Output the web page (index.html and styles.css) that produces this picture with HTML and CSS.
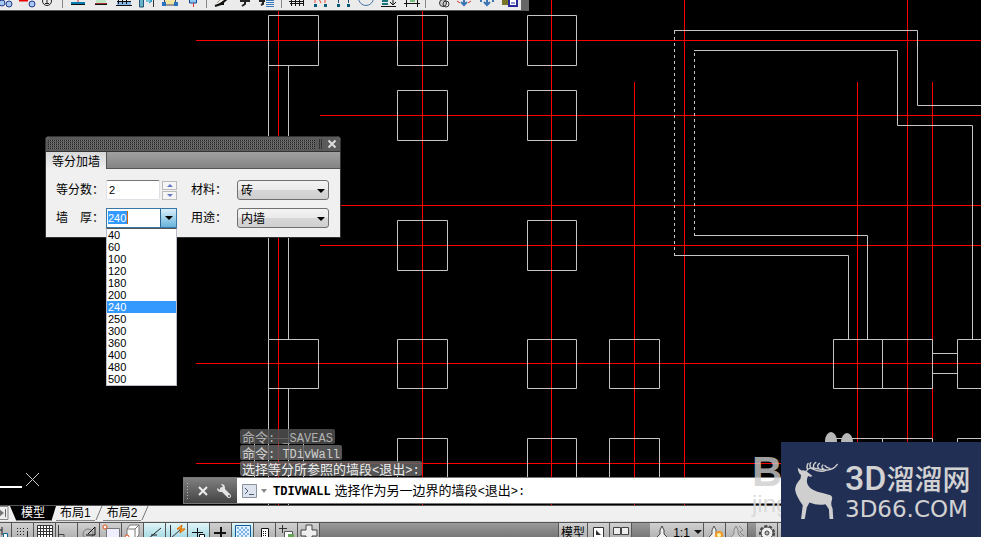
FILE: index.html
```html
<!DOCTYPE html>
<html lang="zh-CN">
<head>
<meta charset="utf-8">
<title>等分加墙</title>
<link rel="stylesheet" href="styles.css">
</head>
<body>
<main class="canvas">
  <svg class="drawing" width="100%" height="100%" aria-hidden="true">
    <g class="axis">
      <path d="M196 40.5H3000M320 115.5H3000M320 205.5H3000M320 245.5H3000M196 363.5H3000M196 463.5H3000"/>
      <path d="M278.500 0V505M422.500 0V505M551.500 0V505M634.500 82V505M684.500 0V505M857.500 82V505M907.500 0V505M932.500 82V505"/>
    </g>
    <g class="wall">
      <path d="M268.500 15.500h50v50h-50zM397.500 15.500h50v50h-50zM527.500 15.500h49v50h-49zM397.500 90.500h50v50h-50zM527.500 90.500h49v50h-49zM397.500 220.500h50v50h-50zM527.500 220.500h49v50h-49z"/>
      <path d="M268.500 339.500h50v49h-50zM397.500 339.500h50v49h-50zM527.500 339.500h49v49h-49zM609.500 339.500h50v49h-50zM833.500 339.500h49v49h-49zM882.500 339.500h50v49h-50zM957.500 339.500h50v49h-50zM932.500 353.500h25M932.500 373.500h25"/>
      <path d="M254.500 438.500h49v50h-49zM397.500 438.500h50v50h-50zM527.500 438.500h49v50h-49zM609.500 438.500h50v50h-50zM833.500 438.500h49v50h-49zM882.500 438.500h50v50h-50zM957.500 438.500h50v50h-50z"/>
      <path d="M268.500 65V339M288.500 65V339M268.500 388V505M288.500 388V505"/>
      <path d="M674 30.500H917.500V105.500H1000M694 50.500H897.500V125.500H972.500V339M694 235.500H867.500V339M674 255.500H848.500V339"/>
      <path stroke-dasharray="3 3" d="M674.500 31V255M694.500 53V235"/>
    </g>
    <path stroke="#fff" stroke-width="2" d="M0 487H22"/>
    <path stroke="#ccc" d="M26 473L39 486M39 473L26 486"/>
  </svg>

  <div class="toolbar" role="toolbar" aria-label="工具">
    <button aria-label="轴号"><svg viewBox="0 0 20 10"><g fill="#a9c8f0" stroke="#223a8c"><circle cx="9" cy="3" r="3"/><circle cx="16" cy="4" r="3"/></g></svg></button>
    <button aria-label="删除轴号"><svg viewBox="0 0 20 10"><path stroke="#e00" stroke-width="2" d="M3 0.500H12"/><circle cx="16" cy="4" r="3" fill="#a9c8f0" stroke="#223a8c"/></svg></button>
    <button aria-label="编号"><svg viewBox="0 0 20 10"><circle cx="8" cy="1" r="4.500" fill="none" stroke="#222"/><path stroke="#222" d="M8 0V4M6 3.500h4"/></svg></button>
    <i></i>
    <button aria-label="墙体"><svg viewBox="0 0 20 10"><path stroke="#d33" d="M10 0V3"/><path fill="#087eb0" d="M3 2h14v3H3z"/><path fill="#111" d="M3 4h14v1H3z"/></svg></button>
    <button aria-label="墙面"><svg viewBox="0 0 20 10"><path fill="#bfe6c4" d="M5 0h10v4H5z"/><path stroke="#a33" d="M4 3.500h12"/><path stroke="#111" d="M4 4.500h12"/></svg></button>
    <button aria-label="幕墙"><svg viewBox="0 0 20 10"><path fill="#88b8e8" d="M3 1h14v4H3z"/><path stroke="#111" d="M2 5.500h16M4.500 0v4M8.500 0v4M12.500 0v4M3 1.500h14"/></svg></button>
    <button aria-label="偏移"><svg viewBox="0 0 20 10"><path fill="#64b5c9" stroke="#257" d="M2.500-1h4v8h-4z"/><path stroke="#19c" fill="none" d="M9 1h6M12-1l3 2-3 2"/><path stroke="#333" d="M16.500 0v7"/></svg></button>
    <button aria-label="房间"><svg viewBox="0 0 20 10"><path fill="#efe4a0" stroke="#446" d="M4.500-1h11v6h-11z"/><path fill="#2872c0" d="M2 2h4v4H2zM14 2h4v4h-4z"/></svg></button>
    <button aria-label="标柱"><svg viewBox="0 0 20 10"><path fill="#90c8f0" stroke="#149" d="M6.500-1h7v4h-7z"/><path stroke="#d33" d="M10.500 3v4"/></svg></button>
    <i></i>
    <button aria-label="画笔"><svg viewBox="0 0 20 10"><path stroke="#111" stroke-width="2" d="M3 6l6-2 7-6M9 4l3 0"/><path stroke="#a98" d="M8 0l-3 3"/></svg></button>
    <button aria-label="文字"><svg viewBox="0 0 20 10"><path fill="none" stroke="#222" stroke-width="2" d="M5 1h10M10-1v5l-3 2"/></svg></button>
    <button aria-label="多行文字"><svg viewBox="0 0 20 10"><path fill="none" stroke="#222" stroke-width="2" d="M1 1h6M5-1v5l-2 1"/><path stroke="#3779bd" d="M8 .5h8M8 2.500h8M8 4.500h8M8 6.500h8"/></svg></button>
    <i></i>
    <button aria-label="标注"><svg viewBox="0 0 20 10"><path fill="none" stroke="#111" d="M3 3.500h14M4.500-1v7M8.500-1v7M12.500-1v7M16.500-1v7M2 1.500h15"/></svg></button>
    <button aria-label="逐点"><svg viewBox="0 0 20 10"><path fill="#075b7b" d="M4 4h3v3H4zM14 4h3v3h-3z"/><path stroke="#e43" d="M5 0v3M9-1l2 4M15 0v3"/></svg></button>
    <button aria-label="两点"><svg viewBox="0 0 20 10"><path fill="#075b7b" d="M4 4h3v3H4zM14 4h3v3h-3z"/><path stroke="#246" d="M5.500 0v3M15.500 0v3"/></svg></button>
    <button aria-label="半径"><svg viewBox="0 0 20 10"><circle cx="10" cy="-2" r="7.500" fill="none" stroke="#4777aa"/></svg></button>
    <button aria-label="标高"><svg viewBox="0 0 20 10"><path stroke="#18747f" stroke-width="2" d="M3 1h6M3 4h6"/><path stroke="#111" fill="none" d="M2 6.500h15M14-1v5M11 2l3 3 3-3"/></svg></button>
    <button aria-label="修剪"><svg viewBox="0 0 20 10"><path stroke="#111" d="M2 3.500h16M4.500-1v8M15.500-1v8"/><path fill="#75bd80" d="M8 0h5v2H8z"/></svg></button>
    <i></i>
    <button aria-label="视口"><svg viewBox="0 0 20 10"><circle cx="12" cy="3" r="3.500" fill="#ccc" stroke="#333"/><circle cx="15" cy="4" r="3" fill="none" stroke="#333"/></svg></button>
    <button aria-label="移动"><svg viewBox="0 0 20 10"><path fill="none" stroke="#3b75b5" stroke-width="2" d="M10-1v6M7 2l3 3 3-3"/><path stroke="#d33" d="M3 1l3 2M17 1l-3 2"/></svg></button>
    <button aria-label="插入"><svg viewBox="0 0 20 10"><path fill="none" stroke="#3b75b5" stroke-width="2" d="M10-1v6M7 2l3 3 3-3M3 1h2M15 1h2"/></svg></button>
    <button aria-label="保存"><svg viewBox="0 0 20 10"><path fill="#777526" d="M2 0h7v5H2z"/><path fill="#fff" stroke="#2b2a9b" stroke-width="2" d="M9-1h8v7H9z"/><path stroke="#2b2a9b" d="M11 3h4"/></svg></button>
  </div>

  <section class="dialog" aria-label="等分加墙">
    <header class="grip"><span class="dots"></span><span class="bars"></span><button class="close" aria-label="关闭"><svg viewBox="0 0 10 10"><path d="M1.500 1.500l7 7M8.500 1.500l-7 7" stroke="#ddd" stroke-width="2"/></svg></button></header>
    <div class="caption"><h1>等分加墙</h1></div>
    <form class="fields">
      <label for="count">等分数：</label>
      <div class="spin"><input id="count" type="text" value="2"><span><button type="button" aria-label="增加"></button><button type="button" class="down" aria-label="减少"></button></span></div>
      <label for="material">材料：</label>
      <div class="pick"><select id="material"><option>砖</option></select></div>
      <label for="thick" class="spread"><span>墙</span><span>厚：</span></label>
      <div class="combo">
        <div class="value"><input id="thick" type="text" value="240" role="combobox" aria-expanded="true" aria-controls="sizes"></div><button type="button" aria-label="展开"></button>
        <ul id="sizes" role="listbox">
          <li role="option">40</li><li role="option">60</li><li role="option">100</li><li role="option">120</li><li role="option">180</li><li role="option">200</li><li role="option" aria-selected="true">240</li><li role="option">250</li><li role="option">300</li><li role="option">360</li><li role="option">400</li><li role="option">480</li><li role="option">500</li>
        </ul>
      </div>
      <label for="usage">用途：</label>
      <div class="pick"><select id="usage"><option>内墙</option></select></div>
    </form>
  </section>

  <div class="console">
    <ol class="history"><li class="old">命令<span>: _SAVEAS</span></li><li class="mid">命令<span>: TDivWall</span></li><li>选择等分所参照的墙段<span>&lt;</span>退出<span>&gt;:</span></li></ol>
    <div class="prompt">
      <div class="handle">
        <span class="dotgrip"></span>
        <button aria-label="关闭"><svg width="10" height="10"><path d="M1 1l8 8M9 1l-8 8" stroke="#eee" stroke-width="2"/></svg></button>
        <button aria-label="自定义"><svg width="16" height="16"><path d="M6 6l7 7" stroke="#e4e4e4" stroke-width="4" stroke-linecap="round"/><path fill="#e4e4e4" d="M5 1a4 4 0 1 1-4 4l3 2 3-3z"/><circle cx="13" cy="13" r="1" fill="#555"/></svg></button>
      </div>
      <button class="recent" aria-label="最近命令"><svg width="26" height="16"><path fill="#dde3ec" stroke="#8a92a0" d="M.5 1.500h14v13H.5z"/><path fill="none" stroke="#4b5b73" d="M3 5l3 3-3 3M7 11.500h5"/><path fill="#888" d="M19 6h6l-3 4z"/></svg></button>
      <p><b>TDIVWALL</b>选择作为另一边界的墙段<span>&lt;</span>退出<span>&gt;:</span></p>
    </div>
  </div>
</main>

<nav class="tabs" aria-label="布局">
  <button class="last" aria-label="末页"><svg width="12" height="15"><path fill="#eee" stroke="#888" d="M-1 .5h10v13H-1z"/><path fill="#777" d="M0 3l5 4-5 4z"/><path stroke="#666" d="M6.500 3v8"/></svg></button>
  <button class="model">模型</button>
  <button>布局1</button>
  <svg class="slash" width="8" height="15"><path d="M7 0L1 14" stroke="#777"/></svg>
  <button>布局2</button>
  <svg class="slash" width="8" height="15"><path d="M7 0L1 14" stroke="#777"/></svg>
</nav>

<footer class="status">
  <button class="first" aria-label="推断"><svg viewBox="0 0 22 14"><path stroke="#222" d="M8 7h5M13 4v8"/><path fill="#fff" stroke="#169" d="M14.500 10.500h4v5h-4z"/></svg></button>
  <button aria-label="捕捉"><svg viewBox="0 0 22 14"><path stroke="#222" stroke-width="1" stroke-dasharray="1 2" d="M5 5.500h9M5 8.500h9M5 11.500h9"/><path stroke="#222" d="M15.500 5v1M15.500 8v6"/></svg></button>
  <button aria-label="栅格"><svg viewBox="0 0 22 14"><path fill="#fff" stroke="#333" d="M3.500 2.500h15v13h-15zM6.500 2v13M9.500 2v13M12.500 2v13M15.500 2v13M3 5.500h15M3 8.500h15M3 11.500h15"/></svg></button>
  <button aria-label="正交"><svg viewBox="0 0 22 14"><path fill="none" stroke="#444" d="M2.500 2v14M2 11.500h6v4"/></svg></button>
  <button aria-label="极轴"><svg viewBox="0 0 22 14"><circle cx="10" cy="11" r="5" fill="none" stroke="#777"/><path fill="none" stroke="#111" d="M10 11L17 4v8H8"/></svg></button>
  <button aria-label="对象捕捉"><svg viewBox="0 0 22 14"><path fill="#eef" stroke="#777" d="M6.500 5.500h13v12h-13z"/><circle cx="5" cy="4" r="2" fill="#fff" stroke="#e74a10"/></svg></button>
  <button aria-label="三维捕捉"><svg viewBox="0 0 22 14"><path fill="#fff" stroke="#777" d="M5 6l3-4h9v10l-4 4H5zM5 6h8v10M13 6l4-4"/><circle cx="5" cy="14" r="2" fill="#fff" stroke="#e74a10"/></svg></button>
  <button class="on" aria-label="追踪"><svg viewBox="0 0 22 14"><path stroke="#222" d="M4 16L17 5M7 12h6"/></svg></button>
  <button class="on" aria-label="动态坐标"><svg viewBox="0 0 22 14"><path stroke="#333" d="M4.500 2v14M5 15l9-8"/><path fill="#ffb52c" stroke="#db6900" d="M11 6l5-4-1 4h4l-5 4 1-4z"/></svg></button>
  <button class="on" aria-label="动态输入"><svg viewBox="0 0 22 14"><path stroke="#111" d="M4 9.500h11M9.500 5v10"/><path fill="#fff" stroke="#111" d="M11.500 11.500h5v4h-5z"/></svg></button>
  <button aria-label="线宽"><svg viewBox="0 0 22 14"><path stroke="#111" stroke-width="2" d="M4 10h12M11 4v12"/></svg></button>
  <button class="on" aria-label="透明度"><svg viewBox="0 0 22 14"><path fill="#dff1ff" stroke="#1459a0" d="M3.500 2.500h15v13h-15z"/><path stroke="#7fb5df" stroke-width="2" stroke-dasharray="2 2" d="M5 5h12M5 9h12M5 13h12"/><path stroke="#7fb5df" stroke-width="2" stroke-dasharray="2 2" d="M7 7h10M7 11h10"/></svg></button>
  <button aria-label="快捷特性"><svg viewBox="0 0 22 14"><path fill="#fff" stroke="#111" d="M7.500 5.500h7v11h-7z"/><path stroke="#111" stroke-dasharray="1 1" d="M9 8.500h4M9 10.500h4M9 12.500h4"/></svg></button>
  <button aria-label="选择循环"><svg viewBox="0 0 22 14"><path stroke="#333" d="M3 5.500h8M6.500 2v8"/><path fill="#fff" stroke="#555" d="M8.500 8.500h8v7h-8z"/><path fill="#66a456" d="M12 11h6v4h-6z"/></svg></button>
  <button aria-label="注释监视"><svg viewBox="0 0 22 14"><path fill="#eee" stroke="#444" d="M8 2h6v5h5v6h-5v4H8v-4H3V7h5z"/></svg></button>
  <span class="fill"></span>
  <button class="space">模型</button>
  <button aria-label="快速查看布局"><svg viewBox="0 0 22 14"><path fill="#fff" stroke="#333" d="M5.500 4.500h10v12h-10z"/><path fill="#333" d="M8 7l5 5H8z"/></svg></button>
  <button aria-label="快速查看图形"><svg viewBox="0 0 22 14"><path fill="#eee" stroke="#444" d="M3.500 4.500h7v7h-7zM11.500 4.500h7v7h-7z"/></svg></button>
  <span class="gap"></span>
  <button class="scale"><svg viewBox="0 0 22 14"><path fill="#eee" stroke="#444" d="M11 3l2 4v4l4 4H5l4-4V7z"/></svg><span>1:1</span><b></b></button>
  <button aria-label="注释可见性"><svg viewBox="0 0 22 14"><path fill="#eee" stroke="#555" d="M10 3l2 4v4l4 4H4l4-4V7z"/><circle cx="15" cy="12" r="3" fill="#fff3b0" stroke="#f29a1f" stroke-width="2"/></svg></button>
  <button aria-label="自动缩放"><svg viewBox="0 0 22 14"><path fill="#ccc" stroke="#888" d="M10 3l2 4v4l4 4H4l4-4V7zM13 3l4 4-3 2 4 4"/></svg></button>
  <span class="gap small"></span>
  <button aria-label="切换工作空间"><svg viewBox="0 0 22 14"><circle cx="11" cy="10" r="7" fill="none" stroke="#444" stroke-width="2" stroke-dasharray="3 2"/><circle cx="11" cy="10" r="6" fill="#eee" stroke="#444"/><circle cx="11" cy="10" r="2" fill="#bbb" stroke="#444"/></svg></button>
  <button aria-label="锁定"></button>
</footer>

<aside class="mark">
  <div class="ghost" aria-hidden="true"><span class="big">B</span><span class="small">jing</span></div>
  <svg class="paw" width="32" height="12" aria-hidden="true"><g fill="#b7b7b7"><ellipse cx="8" cy="9" rx="6" ry="9"/><ellipse cx="24" cy="10" rx="6" ry="9"/></g></svg>
  <div class="brand">
    <svg class="deer" viewBox="155 100 140 185" aria-hidden="true">
      <g fill="none" stroke="#cfcfcf" stroke-width="4" stroke-linecap="round"><path d="M195 136Q202 124 218 127Q238 132 258 133Q277 131 287 116M198 130Q194 122 200 113M207 125Q203 117 208 111M217 126Q213 117 223 110M231 128Q225 119 234 113M247 131Q237 126 244 118M265 128Q254 127 250 120M211 129Q238 142 254 133"/></g>
      <path fill="#cfcfcf" d="M169 126L180 134Q190 132 197 138L213 151Q207 155 200 151Q193 163 199 177Q205 190 228 198Q250 204 267 208Q274 212 271 222Q266 235 273 248L275 279L264 279L262 250L252 235Q228 240 204 230L196 245L190 279H179L184 238Q163 209 161 190Q163 174 177 160L179 148Q170 142 169 126Z"/>
    </svg>
    <div class="words"><strong><span>3D</span>溜溜网</strong><em>3D66.COM</em></div>
  </div>
</aside>
</body>
</html>
```
FILE: styles.css
```css
* { box-sizing: border-box; }
body {
  margin: 0;
  height: 100vh;
  overflow: hidden;
  display: flex;
  flex-direction: column;
  position: relative;
  background: #000;
  color: #000;
  font: 12px/14px "Liberation Sans", "Noto Sans CJK SC", sans-serif;
}
button, input, select { font: inherit; color: inherit; margin: 0; padding: 0; border: 0; background: none; border-radius: 0; }
button { flex: none; display: flex; align-items: center; justify-content: center; }
svg { display: block; flex: none; }

.canvas { flex: 1; position: relative; overflow: hidden; min-height: 0; }
.drawing { position: absolute; inset: 0; fill: none; }
.axis { stroke: #f00; }
.wall { stroke: #c4c4c4; }

.toolbar {
  position: absolute; left: 0; top: 0;
  display: flex;
  height: 11px;
  overflow: hidden;
  background: #ebebeb;
  border-right: 8px solid #666;
  border-bottom: 1px solid #555;
}
.toolbar button { width: 23px; height: 10px; }
.toolbar button:first-child { margin-left: -9px; }
.toolbar svg { width: 20px; height: 10px; }
.toolbar i { width: 6px; background: linear-gradient(#888, #888) 2px 0 / 1px 8px no-repeat; }

.dialog {
  position: absolute; left: 45px; top: 136px;
  width: 296px;
  background: #f0f0f0;
  border: 1px solid #333;
  border-radius: 4px 4px 0 0;
}
.grip { display: flex; align-items: center; gap: 4px; height: 15px; padding: 0 2px; background: #5b5b5b; border-radius: 3px 3px 0 0; border-bottom: 1px solid #333; }
.dots { flex: 1; height: 10px; background: linear-gradient(#5b5b5b 1px, transparent 1px) 0 0 / 2px 2px, linear-gradient(90deg, #222 1px, #777 1px) 0 0 / 2px 2px; }
.bars { width: 3px; height: 10px; border: solid #333; border-width: 0 1px; }
.close { width: 12px; height: 12px; }
.close svg { width: 10px; height: 10px; }
.caption { display: flex; height: 17px; background: linear-gradient(#a0a0a0, #858585); border-bottom: 1px solid #555; }
.caption h1 { margin: 0; height: 17px; padding: 0 6px; font: 12px/17px "Noto Sans CJK SC", sans-serif; background: linear-gradient(#d8d8d8, #f0f0f0); border-right: 1px solid #555; }
.fields {
  display: grid;
  grid-template-columns: 50px 85px 46px 92px;
  grid-template-rows: 20px 20px;
  row-gap: 8px;
  padding: 11px 10px 9px;
  align-items: center;
}
.spread { display: flex; justify-content: space-between; width: 48px; }
.spin { display: flex; gap: 2px; height: 20px; width: 71px; }
.spin input { width: 54px; height: 20px; padding: 0 2px; border: 1px solid #e0e0e6; border-top-color: #777; border-radius: 2px; background: #fff; font-size: 11px; }
.spin span { display: grid; gap: 1px; padding: 1px 0; }
.spin button { width: 15px; height: 9px; border: 1px solid #bbb; background: #f5f5f5; }
.spin button::before { content: ""; border: solid transparent; border-width: 0 3px 3px; border-bottom-color: #6479c8; }
.spin .down::before { border-width: 3px 3px 0; border-top-color: #6479c8; }
.pick { position: relative; height: 20px; }
.pick select { width: 100%; height: 20px; padding: 0 3px; appearance: none; border: 1px solid #707070; border-radius: 3px; background: linear-gradient(#f3f3f3, #eaeaea 50%, #d8d8d8 50%, #cfcfcf); font: 12px/16px "Noto Sans CJK SC", sans-serif; }
.pick::after, .combo > button::before { content: ""; border: solid transparent; border-width: 4px 4px 0; border-top-color: #000; }
.pick::after { position: absolute; right: 4px; top: 9px; pointer-events: none; }
.combo { position: relative; display: flex; width: 71px; height: 20px; border: 1px solid #3878a8; background: #fff; }
.value { flex: 1; padding: 2px 1px; }
.value input { display: block; width: 20px; height: 13px; background: #3399ff; color: #fff; font-size: 11px; border-right: 1px solid #c60; }
.combo > button { width: 16px; border-left: 1px solid #2c628b; background: linear-gradient(#d8effb, #6ab3da); }
.combo ul { position: absolute; left: -1px; top: 19px; width: 71px; margin: 0; padding: 0; list-style: none; background: #fff; border: 1px solid #b8bccb; border-top-color: #555; font-size: 11px; line-height: 12px; }
.combo li { padding-left: 1px; height: 12px; }
.combo [aria-selected] { background: #3399ff; color: #fff; }

.console { position: absolute; left: 183px; right: 0; bottom: 1px; font: 13px/15px "Noto Sans CJK SC", sans-serif; }
.console span, .console b { font-family: "Liberation Mono", monospace; font-size: 12px; line-height: 15px; }
.history { margin: 0 0 1px 57px; padding: 0; list-style: none; display: grid; gap: 1px; justify-items: start; }
.history li { height: 15px; padding: 0 2px; border-radius: 2px; background: rgba(100, 100, 100, .85); color: #eee; white-space: pre; }
.history .old { color: #b0b0b0; background: rgba(80, 80, 80, .85); }
.history .mid { color: #d0d0d0; }
.prompt { display: flex; align-items: center; height: 27px; background: #fff; border: solid #777; border-width: 1px 0 1px 1px; }
.handle { display: flex; align-items: center; gap: 8px; width: 53px; height: 25px; padding: 0 5px 0 2px; background: linear-gradient(#808080, #444); }
.dotgrip { width: 6px; height: 17px; background: radial-gradient(#bbb 1px, transparent 1px) 0 0 / 3px 3px; }
.recent { margin-left: 5px; }
.prompt p { margin: 0 0 0 5px; white-space: pre; }
.prompt b { margin-right: 4px; }

.tabs { display: flex; flex: none; height: 17px; background: #f0f0f0; border-top: 1px solid #555; border-bottom: 1px solid #ddd; }
.tabs button { height: 15px; padding: 0 4px; border-bottom: 1px solid #888; }
.tabs .last { width: 10px; padding: 0; border: 0; }
.tabs .model { width: 46px; padding: 0; color: #fff; background: #000; clip-path: polygon(0 0, 100% 0, 90% 100%, 14% 100%); }

.status { display: flex; flex: none; align-items: flex-start; height: 15px; overflow: hidden; background: linear-gradient(#999, #777); border-top: 1px solid #555; }
.status button { width: 22px; height: 14px; align-items: flex-start; border-right: 1px solid #555; background: linear-gradient(#d0d0d0, #b4b4b4); }
.status .first { width: 12px; justify-content: flex-end; overflow: hidden; }
.status .on { background: linear-gradient(#e0f5f8, #a8dbe4); }
.status svg { width: 22px; height: 14px; }
.fill { width: 238px; }
.status .space { width: 30px; padding-top: 3px; border-left: 1px solid #555; }
.gap { width: 18px; }
.gap.small { width: 8px; }
.status .scale { width: 54px; }
.scale span { padding-top: 3px; }
.scale b { margin: 7px 0 0 4px; border: solid transparent; border-width: 4px 4px 0; border-top-color: #111; }

.mark { position: absolute; right: 0; bottom: 0; }
.brand { position: relative; display: flex; align-items: flex-start; gap: 5px; width: 200px; height: 95px; padding: 17px 10px 0 12px; background: #222f55; color: #d2d2d2; }
.deer { width: 47px; height: 62px; }
.words { display: grid; grid-template-rows: 39px 23px; }
.words strong { font: 500 28px/39px "Noto Sans CJK SC", sans-serif; display: flex; align-items: center; }
.words strong span { font: 500 34px/39px Roboto, sans-serif; }
.words em { font: 23px/23px "DejaVu Sans", sans-serif; }
.ghost { position: absolute; left: -29px; top: 12px; display: grid; justify-items: start; color: rgba(205, 205, 205, .8); }
.ghost .big { font: bold 42px/36px "Liberation Sans", sans-serif; }
.ghost .small { font: 24px/28px "Liberation Sans", sans-serif; color: rgba(215, 215, 215, .9); }
.paw { position: absolute; left: 42px; top: -10px; }
```
